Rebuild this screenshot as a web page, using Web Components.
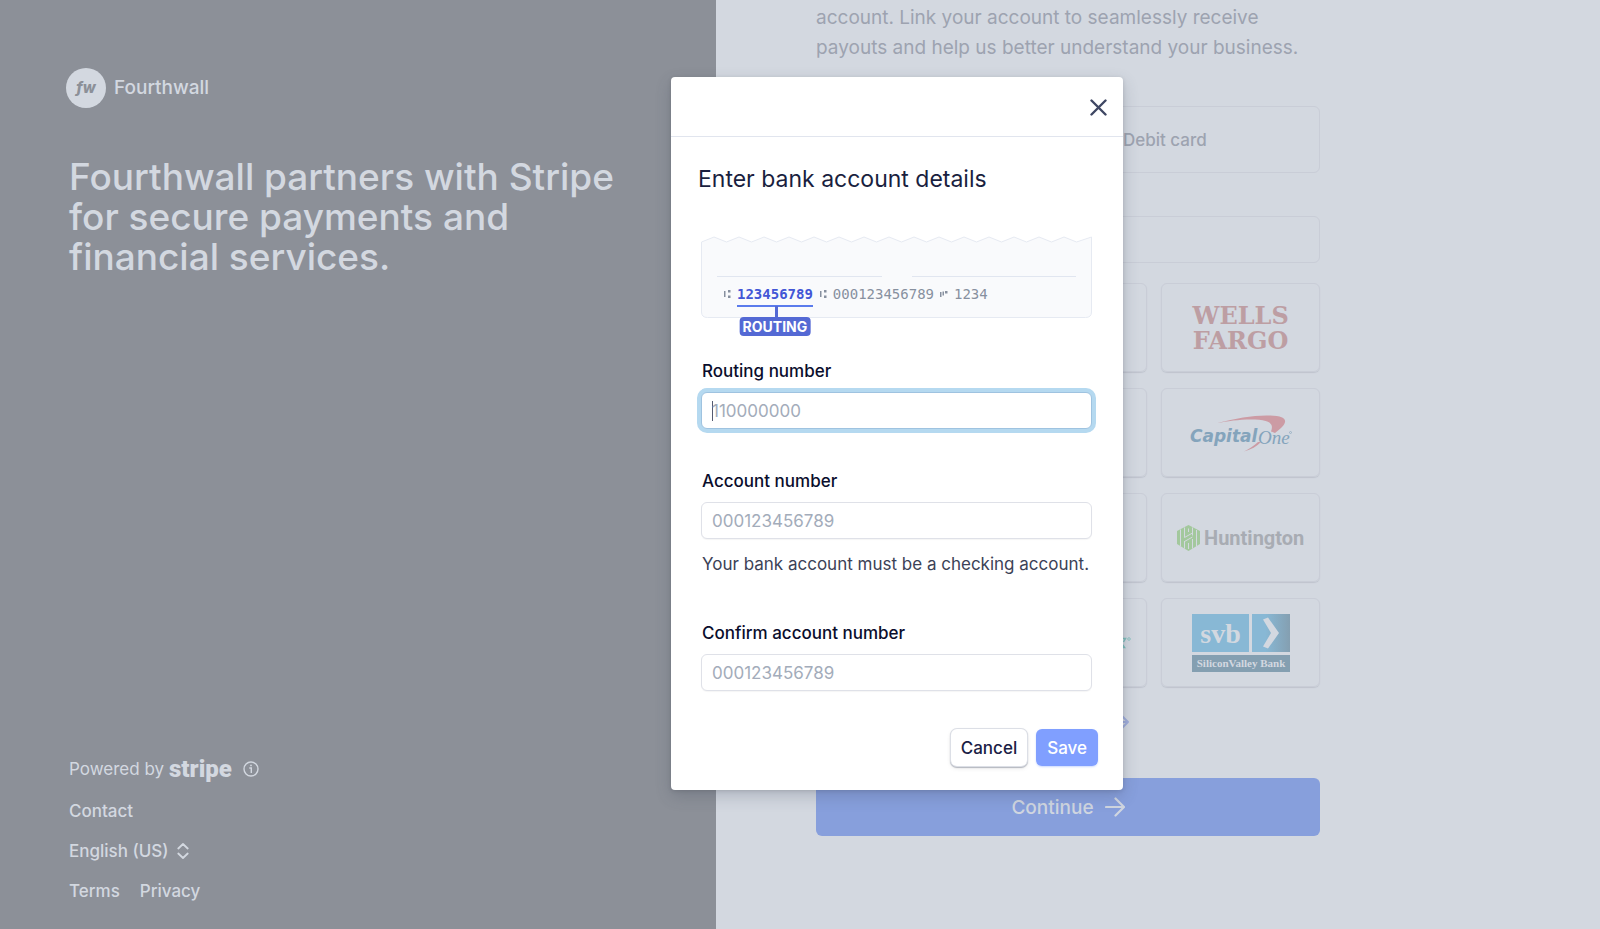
<!DOCTYPE html>
<html lang="en">
<head>
<meta charset="utf-8">
<title>Link your bank account</title>
<style>
html,body{margin:0;height:100%}
body{font-family:Inter,"Liberation Sans",sans-serif;background:#d3d8e0}
</style>
</head>
<body>
<onboarding-page></onboarding-page>
<script>
const define=(name,html,setup)=>{
  const template=document.createElement('template');
  template.innerHTML='<style>*{box-sizing:border-box}</style>'+html;
  customElements.define(name,class extends HTMLElement{
    constructor(){
      super();
      this.attachShadow({mode:'open'}).append(template.content.cloneNode(true));
    }
    connectedCallback(){ if(setup) setup(this,this.shadowRoot); }
  });
};

define('brand-panel',`
<style>
:host{display:flex;flex-direction:column;justify-content:space-between;background:#8c9098;color:#d3d8e0;padding:68px 66px 28px;font-size:17px;line-height:20px}
.brand{display:flex;align-items:center;gap:8px;font-size:19px;line-height:22px;font-weight:500}
.mark{width:40px;height:40px;border-radius:50%;background:#d3d8e0;color:#8c9098;display:grid;place-items:center;font-size:15px;font-style:italic;font-weight:800}
h1{margin:49px 0 0;padding-left:3px;font-size:37px;line-height:40px;font-weight:500;max-width:560px}
footer{display:flex;flex-direction:column;gap:20px;padding-left:3px;font-weight:500}
.powered{display:flex;align-items:center;gap:5px;font-weight:400;padding-bottom:2px}
.stripe{font:900 24px/20px Roboto,sans-serif}
a{color:inherit;text-decoration:none}
.links{display:flex;gap:20px}
button{all:unset;display:flex;align-items:center;gap:8px}
.powered svg{margin-left:6px}
</style>
<header>
  <div class="brand"><span class="mark">fw</span><span>Fourthwall</span></div>
  <h1>Fourthwall partners with Stripe for secure payments and financial services.</h1>
</header>
<footer>
  <div class="powered"><span>Powered by</span><span class="stripe">stripe</span>
    <svg width="16" height="16" viewBox="0 0 16 16" fill="none" stroke="currentColor" stroke-width="1.4"><circle cx="8" cy="8" r="7"/><path d="M6.3 7h2v5"/><circle cx="8" cy="4.4" r=".9" fill="currentColor" stroke="none"/></svg></div>
  <a href="#contact">Contact</a>
  <button type="button">English (US)
    <svg width="12" height="16" viewBox="0 0 12 16" fill="none" stroke="currentColor" stroke-width="1.8" stroke-linecap="round" stroke-linejoin="round"><path d="M1.3 5.5 6 1l4.700 4.500M1.300 10.500 6 15l4.700-4.500"/></svg></button>
  <div class="links"><a href="#terms">Terms</a><a href="#privacy">Privacy</a></div>
</footer>`);

define('bank-card',`
<style>
:host{display:block}
button{all:unset;box-sizing:border-box;display:grid;place-items:center;width:100%;height:100%;border:1px solid #c9cdd7;border-radius:6px;box-shadow:0 1px 1px #bfc4ce}
</style>
<button type="button"><slot></slot></button>`);

define('link-account',`
<style>
:host{display:block;padding:3px 0 0 100px;color:#9da3b0}
.column{width:504px;display:flex;flex-direction:column}
p{margin:0;font-size:19px;line-height:30px}
.tabs{display:grid;grid-template-columns:1fr 1fr;gap:10px;height:67px;margin-top:43px}
.tabs button{all:unset;box-sizing:border-box;display:flex;align-items:center;padding-left:49px;border:1px solid #c9cdd7;border-radius:6px;font-size:17px;font-weight:500}
.search{font:17px Inter,sans-serif;height:47px;margin:43px 0 20px;border:1px solid #c9cdd7;border-radius:6px;background:none}
.banks{display:grid;grid-template-columns:repeat(3,1fr);grid-auto-rows:89px;gap:16px 14px}
.wells{font:bold 24px/25px "DejaVu Serif",serif;color:#bd9ea3;text-align:center}
.huntington{display:flex;align-items:center;gap:4px;font:bold 20px/26px Roboto,sans-serif;color:#a8acb3}
svg{display:block}
.edge{justify-self:end;margin-right:15px}
.manual{display:flex;justify-content:center;margin:27px 0 48px;padding-left:108px;color:#a0addb}
.continue{all:unset;display:flex;align-items:center;justify-content:center;gap:11px;height:58px;border-radius:6px;background:#879fdc;color:#d0d6e0;font-size:19px;font-weight:500}
</style>
<div class="column">
  <p>account. Link your account to seamlessly receive payouts and help us better understand your business.</p>
  <div class="tabs"><button type="button" aria-label="Bank"></button><button type="button">Debit card</button></div>
  <input class="search" type="search" aria-label="Search">
  <div class="banks">
    <bank-card></bank-card><bank-card></bank-card>
    <bank-card><div class="wells">WELLS<br>FARGO</div></bank-card>
    <bank-card></bank-card><bank-card></bank-card>
    <bank-card><svg width="102" height="38" viewBox="0 0 102 38">
      <path d="M27 9C47 4 64 1 80 1.500c16 .500 18 5 12 11.500-2 2.200-4.500 4-7 6-2-1-3-1-4-1.500C84 10 80 6 65 5.500 52 5 38 7 27 9Z" fill="#cc9ba4"/>
      <path d="M68 28c-4 4-9 7-14 9.500 7-2 13-5 17-9.500Z" fill="#cc9ba4"/>
      <text x="0" y="28" font-family="DejaVu Sans" font-weight="700" font-style="italic" font-size="17" fill="#84a4bc">Capital</text>
      <text x="68" y="30" font-family="Liberation Serif" font-style="italic" font-size="19" fill="#84a4bc">One</text>
      <circle cx="100.500" cy="18.500" r="1" fill="none" stroke="#84a4bc" stroke-width=".6"/></svg></bank-card>
    <bank-card></bank-card><bank-card></bank-card>
    <bank-card><div class="huntington"><svg width="23" height="26" viewBox="0 0 23 26"><path d="M11.500 0 23 6v13l-11.500 7L0 19V6Z" fill="#a3c89d"/><path d="M3.500 4.500v16.500M7.500 2.500v10M7.500 16v7.500M11.500 7V3.500M15.500 2.500v8M15.500 14v9.500M19.500 5v16.500M7.500 12.500l8-4.500M7.500 16.500l8-4.500M11.500 18v6" fill="none" stroke="#d3d8e0" stroke-width="1"/></svg><span>Huntington</span></div></bank-card>
    <bank-card></bank-card>
    <bank-card><svg class="edge" width="10" height="12" viewBox="0 0 10 12"><path d="M0 1.500h4.500L2.500 5M1 7l2.500 3.500H0" fill="none" stroke="#7fc0bd" stroke-width="1.500"/><circle cx="8" cy="2" r="1.300" fill="none" stroke="#7fc0bd" stroke-width=".8"/></svg></bank-card>
    <bank-card><svg width="98" height="58" viewBox="0 0 98 58">
      <defs><linearGradient id="fade"><stop offset=".35" stop-color="#88b8d5"/><stop offset="1" stop-color="#849fb1"/></linearGradient></defs>
      <path d="M0 0h57v38H0Z" fill="#88b8d5"/><path d="M60 0h38v38H60Z" fill="url(#fade)"/><path d="M0 41h98v17H0Z" fill="#849fb1"/>
      <path d="M71 5.500 76 3.500 87 19 76 34.500 71 32.500 79 19Z" fill="#d3d8e0"/>
      <text x="28.500" y="29" text-anchor="middle" font-family="Liberation Serif" font-weight="700" font-size="28" fill="#d3d8e0">svb</text>
      <text x="49" y="53" text-anchor="middle" font-family="Liberation Serif" font-weight="700" font-size="11" fill="#d3d8e0">SiliconValley Bank</text></svg></bank-card>
  </div>
  <a class="manual" href="#manual" aria-label="Enter details manually"><svg width="14" height="16" viewBox="0 0 14 16" fill="none" stroke="#a0addb" stroke-width="2" stroke-linecap="round" stroke-linejoin="round"><path d="M1 8h12M7 2l6 6-6 6"/></svg></a>
  <button class="continue" type="button">Continue
    <svg width="20" height="20" viewBox="0 0 20 20" fill="none" stroke="currentColor" stroke-width="2.200" stroke-linecap="round" stroke-linejoin="round"><path d="M1 10h18M10.500 1.500 19 10l-8.500 8.500"/></svg></button>
</div>`);

define('check-diagram',`
<style>
:host{display:block;position:relative;height:82px}
.paper{position:absolute;inset:0;width:100%;height:100%}
.rules{display:flex;gap:30px;padding:40px 16px 0;position:relative}
.rules i{flex:1;height:1px;background:#e1e6f0}
.micr{position:relative;display:flex;align-items:center;gap:6px;padding:9px 0 0 22px;font:14px/16px "DejaVu Sans Mono",monospace;color:#87909f}
.micr b{position:relative;color:#4256d6}
.micr b::before{content:"";position:absolute;left:0;right:0;top:19px;height:2px;background:#5b7bec}
.micr b::after{content:"";position:absolute;left:50%;top:20px;width:3px;height:11px;background:#5469d4}
.tag{position:absolute;left:50%;top:31px;transform:translateX(-50%);padding:0 3px;border-radius:4px;background:#5469d4;color:#fff;font:700 14px/19px Inter,sans-serif}
svg{display:block}
</style>
<svg class="paper" viewBox="0 0 391 82" preserveAspectRatio="none"><path d="M.5 6 13 1l12.500 5L38 1l12.500 5L63 1l12.500 5L88 1l12.500 5L113 1l12.500 5L138 1l12.500 5L163 1l12.500 5L188 1l12.500 5L213 1l12.500 5L238 1l12.500 5L263 1l12.500 5L288 1l12.500 5L313 1l12.500 5L338 1l12.500 5L363 1l12.500 5L390.500 1V76q0 5.500-6 5.500H6.500q-6 0-6-5.500Z" fill="#f9fafc" stroke="#e6eaf2"/></svg>
<div class="rules"><i></i><i></i></div>
<div class="micr">
  <svg width="8" height="10" viewBox="0 0 8 10" fill="#87909f"><path d="M1 2h1.500v6H1zM5 1h2.500v2.500H5zM5 6.500h2.500V9H5z"/></svg>
  <b>123456789<span class="tag">ROUTING</span></b>
  <svg width="8" height="10" viewBox="0 0 8 10" fill="#87909f"><path d="M1 2h1.500v6H1zM5 1h2.500v2.500H5zM5 6.500h2.500V9H5z"/></svg>
  <span>000123456789</span>
  <svg width="8" height="10" viewBox="0 0 8 10" fill="#87909f"><path d="M0 3h1.500v5H0zM2.500 2.500H4v4H2.500zM5 2h2.500v2.500H5z"/></svg>
  <span>1234</span>
</div>`);

define('text-field',`
<style>
:host{display:block;font-size:17px}
label{display:block;padding-left:1px;line-height:20px;font-weight:500;color:#0a0d2c}
input{display:block;width:100%;height:37px;margin-top:11px;padding:0 10px;font:400 17px Inter,sans-serif;color:#30313d;border:1px solid #dfe1e8;border-radius:6px;background:#fff;outline:0;box-shadow:0 1px 1px #0000000a}
input::placeholder{color:#a3acba;opacity:1}
:host([active]) input{border-color:#9fc3e0;box-shadow:0 0 0 4px #b5d9f0;background:linear-gradient(#555b70,#555b70) 10px 50%/1px 20px no-repeat #fff}
.help{padding:15px 0 0 1px;line-height:20px;color:#3c4257}
.help:empty{display:none}
</style>
<label for="field"></label><input id="field" type="text" inputmode="numeric"><div class="help"></div>`,
(host,root)=>{
  root.querySelector('label').textContent=host.getAttribute('label');
  root.querySelector('input').placeholder=host.getAttribute('placeholder');
  root.querySelector('.help').textContent=host.getAttribute('help')||'';
});

define('action-button',`
<style>
:host{display:block}
button{font:500 17px/20px Inter,sans-serif;display:block;height:37px;padding:0 10px;border:0;border-radius:6px;background:#fff;color:#1a2145;box-shadow:0 0 0 1px #dcdfe6,0 1px 1px 1px #b4b7bf,0 2px 5px #0000001a}
:host([primary]) button{background:#809fff;color:#fff;padding:0 11px;box-shadow:0 1px 2px #809fff66}
</style>
<button type="button"><slot></slot></button>`);

define('bank-dialog',`
<style>
:host{display:block;width:452px;background:#fff;border-radius:4px;box-shadow:0 6px 16px #3c42573d,0 1px 4px #0000001f}
header{display:flex;align-items:center;justify-content:flex-end;height:60px;padding:1px 16px 0 0;border-bottom:1px solid #e1e5ee}
.close{all:unset;display:block}
svg{display:block}
form{padding:26px 31px 0 30px;display:flex;flex-direction:column}
h2{margin:0 0 41px -3px;font-size:23px;line-height:32px;font-weight:400;color:#1a1f40}
.routing{margin-top:43px}
.account{margin-top:42px}
.confirm{margin-top:49px}
.actions{display:flex;justify-content:flex-end;gap:9px;margin:38px -6px 0 0;padding-bottom:24px}
</style>
<header><button class="close" type="button" aria-label="Close"><svg width="17" height="17" viewBox="0 0 17 17" stroke="#3f4763" stroke-width="2.400" stroke-linecap="round"><path d="m1.500 1.500 14 14m0-14-14 14"/></svg></button></header>
<form>
  <h2>Enter bank account details</h2>
  <check-diagram></check-diagram>
  <text-field class="routing" active label="Routing number" placeholder="110000000"></text-field>
  <text-field class="account" label="Account number" placeholder="000123456789" help="Your bank account must be a checking account."></text-field>
  <text-field class="confirm" label="Confirm account number" placeholder="000123456789"></text-field>
  <div class="actions"><action-button>Cancel</action-button><action-button primary>Save</action-button></div>
</form>`);

define('onboarding-page',`
<style>
:host{display:grid;grid-template-columns:44.75% 1fr;min-height:100vh;position:relative;overflow:hidden}
.overlay{position:absolute;inset:0;padding:77px 0 0 calc(50% - 129px)}
</style>
<brand-panel></brand-panel>
<link-account></link-account>
<div class="overlay"><bank-dialog role="dialog" aria-label="Enter bank account details"></bank-dialog></div>`);
</script>
</body>
</html>
